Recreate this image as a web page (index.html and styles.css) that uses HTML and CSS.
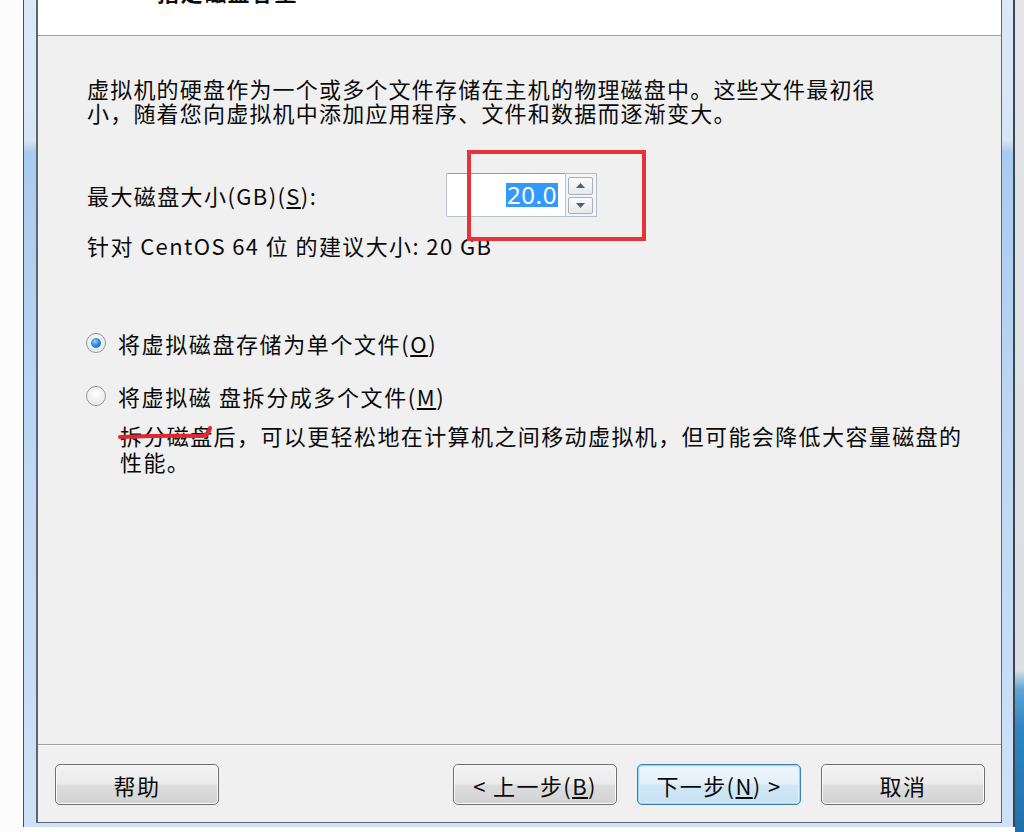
FILE: index.html
```html
<!DOCTYPE html>
<html lang="zh-CN">
<head>
<meta charset="utf-8">
<title>新建虚拟机向导</title>
<link rel="stylesheet" href="styles.css">
</head>
<body>
<div class="screen">
  <div class="desk-left"></div>
  <div class="window">
    <div class="dialog">
      <div class="header"><div class="title">指定磁盘容量</div></div>
      <div class="body">
        <p class="intro"><span>虚拟机的硬盘作为一个或多个文件存储在主机的物理磁盘中。这些文件最初很</span><span>小，随着您向虚拟机中添加应用程序、文件和数据而逐渐变大。</span></p>
        <div class="size-row">
          <label class="size-label">最大磁盘大小(GB)(<u>S</u>):</label>
          <div class="spin">
            <div class="spin-input"><span class="sel">20.0</span></div>
            <div class="spin-btns">
              <div class="spin-btn"><svg width="9" height="5" viewBox="0 0 9 5"><path d="M0 5 L4.5 0 L9 5 Z" fill="#4a5f86"/></svg></div>
              <div class="spin-btn"><svg width="9" height="5" viewBox="0 0 9 5"><path d="M0 0 L4.5 5 L9 0 Z" fill="#4a5f86"/></svg></div>
            </div>
          </div>
        </div>
        <div class="rec">针对 CentOS 64 位 的建议大小: 20 GB</div>
        <div class="radio-row first"><span class="radio on"><span class="dot"></span></span><span class="rtext">将虚拟磁盘存储为单个文件(<u>O</u>)</span></div>
        <div class="radio-row second"><span class="radio"></span><span class="rtext">将虚拟磁 盘拆分成多个文件(<u>M</u>)</span></div>
        <p class="desc"><span>拆分磁盘后，可以更轻松地在计算机之间移动虚拟机，但可能会降低大容量磁盘的</span><span>性能。</span></p>
      </div>
      <div class="footer">
        <button class="btn">帮助</button>
        <div class="spacer"></div>
        <button class="btn">&lt; 上一步(<u>B</u>)</button>
        <button class="btn focus">下一步(<u>N</u>) &gt;</button>
        <button class="btn">取消</button>
      </div>
    </div>
  </div>
  <div class="desk-right"></div>
</div>
<div class="mark-box"></div>
<svg class="mark-strike" width="100" height="20" viewBox="0 0 100 20"><path d="M4 14 C30 13 60 12 84 13 C90 13 93 10 94 5" fill="none" stroke="#e0282c" stroke-width="4" stroke-linecap="round"/></svg>
</body>
</html>
```

FILE: styles.css
```css
html, body {
  margin: 0;
  padding: 0;
}
body {
  width: 1024px;
  height: 832px;
  overflow: hidden;
  background: #ffffff;
  position: relative;
  font-family: "Noto Sans CJK SC", "Microsoft YaHei", sans-serif;
  color: #0a0a0a;
}
.screen {
  display: flex;
  height: 832px;
}
.desk-left {
  width: 23px;
  flex: none;
  background: #fcfcfc;
}
.desk-right {
  width: 9px;
  flex: none;
  background: linear-gradient(to bottom, #e2e4e7 0, #dcdfe3 670px, #5ea3d6 690px, #2d84c2 730px, #1f71aa 832px);
}
.window {
  width: 992px;
  height: 827px;
  flex: none;
  box-sizing: border-box;
  border-left: 1px solid #44505c;
  border-right: 2px solid #3a4550;
  padding: 0 11px 4px 12px;
  background: linear-gradient(to bottom, #dce8f6 0, #d6e5f6 140px, #aacaef 152px, #bcd6f3 400px, #cfe1f6 827px);
}
.dialog {
  height: 823px;
  box-sizing: border-box;
  border-left: 2px solid #5b6673;
  border-right: 1px solid #5b6673;
  border-bottom: 1px solid #5b6673;
  background: #f0f0f0;
  display: flex;
  flex-direction: column;
}
.header {
  height: 35px;
  flex: none;
  background: #ffffff;
  border-bottom: 1px solid #a0a0a0;
  overflow: hidden;
  padding-left: 119px;
}
.title {
  margin-top: -21px;
  font-size: 22px;
  line-height: 24px;
  font-weight: bold;
  letter-spacing: 1.5px;
}
.body {
  height: 708px;
  flex: none;
  box-sizing: border-box;
  padding: 40px 0 0 49px;
  font-size: 22px;
  letter-spacing: 1.4px;
}
.intro,
.desc {
  margin: 0;
}
.intro span,
.desc span {
  display: block;
  white-space: nowrap;
}
.intro {
  line-height: 24px;
  letter-spacing: 1.2px;
}
.size-row {
  margin-top: 49px;
  height: 44px;
  display: flex;
  align-items: center;
}
.size-label {
  width: 359px;
  flex: none;
  line-height: 24px;
}
.spin {
  display: flex;
  height: 44px;
}
.spin-input {
  width: 120px;
  box-sizing: border-box;
  border: 1px solid #b9c3d0;
  border-top-color: #8e9aab;
  border-radius: 2px 0 0 2px;
  background: #ffffff;
  display: flex;
  align-items: center;
  justify-content: flex-end;
  padding-right: 7px;
}
.sel {
  background: #3399ff;
  color: #ffffff;
  font-size: 24px;
  line-height: 24px;
  height: 24px;
  padding: 0 1px;
  letter-spacing: 0.6px;
  font-family: "Noto Sans", "Noto Sans CJK SC", sans-serif;
}
.spin-btns {
  width: 31px;
  box-sizing: border-box;
  border: 1px solid #b5bcc6;
  border-left: none;
  background: #f4f5f7;
  padding: 3px 3px 2px 2px;
  display: flex;
  flex-direction: column;
  gap: 2px;
}
.spin-btn {
  flex: 1;
  box-sizing: border-box;
  border: 1px solid #a7afba;
  border-radius: 2px;
  background: linear-gradient(to bottom, #fbfbfb, #e6e8eb);
  display: flex;
  align-items: center;
  justify-content: center;
}
.rec {
  margin-top: 16px;
  line-height: 24px;
}
.radio-row {
  display: flex;
  align-items: center;
  height: 28px;
  gap: 12px;
  margin-left: -1px;
}
.radio-row.first {
  margin-top: 72px;
}
.radio-row.second {
  margin-top: 25px;
}
.rtext {
  line-height: 28px;
  letter-spacing: 1.6px;
}
.radio {
  width: 20px;
  height: 20px;
  flex: none;
  box-sizing: border-box;
  border-radius: 50%;
  border: 1px solid #8f969e;
  background: radial-gradient(circle at 50% 40%, #ffffff 0, #f1f1f1 45%, #d5d8dc 100%);
  display: flex;
  align-items: center;
  justify-content: center;
  box-shadow: inset 0 0 0 1px #f4f4f4;
}
.dot {
  width: 10px;
  height: 10px;
  border-radius: 50%;
  background: radial-gradient(circle at 40% 35%, #8fd0ff 0, #2f8fe0 45%, #0f4f9a 100%);
}
.desc {
  margin-top: 12px;
  padding-left: 33px;
  line-height: 26px;
  letter-spacing: 1.4px;
}
.footer {
  flex: 1;
  border-top: 1px solid #a0a0a0;
  box-shadow: inset 0 1px 0 #ffffff;
  display: flex;
  align-items: flex-start;
  padding: 19px 16px 0 17px;
  gap: 20px;
}
.spacer {
  flex: 1;
}
.btn {
  width: 164px;
  height: 41px;
  flex: none;
  box-sizing: border-box;
  border: 1px solid #707070;
  border-radius: 5px;
  background: linear-gradient(to bottom, #f3f3f3 0, #ebebeb 48%, #dddddd 52%, #d2d2d2 100%);
  box-shadow: inset 0 0 0 1px #fbfbfb;
  font-family: "Noto Sans CJK SC", "Microsoft YaHei", sans-serif;
  font-size: 22px;
  letter-spacing: 1.4px;
  color: #0a0a0a;
  padding: 0;
  line-height: 24px;
}
.btn.focus {
  border-color: #3c7fb1;
  background: linear-gradient(to bottom, #eef6fc 0, #e3f0fa 48%, #d2e7f6 52%, #c6e0f4 100%);
  box-shadow: inset 0 0 0 1px #97d4f8, inset 0 0 0 2px #d8eefc;
}
.mark-box {
  position: absolute;
  left: 467px;
  top: 150px;
  width: 179px;
  height: 91px;
  box-sizing: border-box;
  border: 4px solid #e5333b;
}
.mark-strike {
  position: absolute;
  left: 116px;
  top: 423px;
}
```
